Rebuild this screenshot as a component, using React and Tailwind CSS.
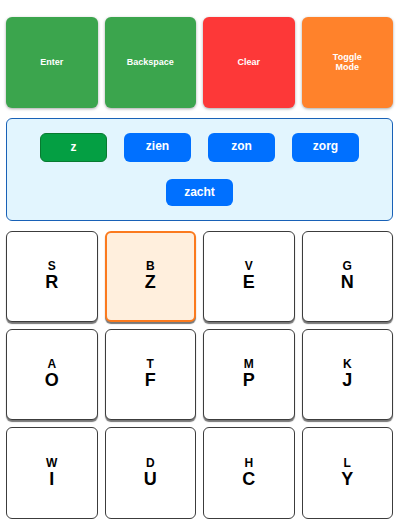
const actions = [
  { label: 'Enter', color: 'bg-[#3ba54d]' },
  { label: 'Backspace', color: 'bg-[#3ba54d]' },
  { label: 'Clear', color: 'bg-[#fd3838]' },
  { label: 'Toggle Mode', color: 'bg-[#ff822b]' },
];

const words = ['z', 'zien', 'zon', 'zorg', 'zacht'];

const keys = ['SR', 'BZ', 'VE', 'GN', 'AO', 'TF', 'MP', 'KJ', 'WI', 'DU', 'HC', 'LY'];

function ActionButton({ label, color }) {
  return (
    <button
      type="button"
      className={`flex h-[91px] items-center justify-center rounded-md px-6 pb-0.5 text-center text-[9px] leading-[10px] font-bold text-white shadow-[0_1px_3px_rgba(0,0,0,0.35)] ${color}`}
    >
      {label}
    </button>
  );
}

function WordButton({ word, active }) {
  return (
    <button
      type="button"
      className={`flex min-h-[27px] w-[67px] items-start justify-center rounded-md pt-1.5 pb-[7px] text-[12px] leading-[14px] font-bold text-white ${
        active ? 'border border-[#087a30] bg-[#049f43]' : 'bg-[#0070ff]'
      }`}
    >
      {word}
    </button>
  );
}

function LetterKey({ letters, active, last }) {
  return (
    <button
      type="button"
      className={`flex flex-col items-center justify-center rounded-md pb-0.5 font-bold text-black ${
        active ? 'border-2 border-[#fb7a1e] bg-[#ffefdd]' : 'border border-[#3c3c3c] bg-white'
      } ${last ? 'h-[92px]' : 'h-[91px] shadow-[0_2px_1px_#777777]'}`}
    >
      <span className="text-[12px] leading-[13px]">{letters[0]}</span>
      <span className="text-[18px] leading-[18px]">{letters[1]}</span>
    </button>
  );
}

export default function App() {
  return (
    <main className="flex flex-col gap-2.5 bg-white pt-[17px] pr-[13px] pb-[5px] pl-1.5 font-['Liberation_Sans',Arial,sans-serif]">
      <div className="grid grid-cols-4 gap-[7px]">
        {actions.map((action) => (
          <ActionButton key={action.label} {...action} />
        ))}
      </div>
      <section className="flex flex-wrap justify-center gap-[17px] rounded-md border border-[#1861b7] bg-[#e2f5fe] px-4 py-3.5">
        {words.map((word, i) => (
          <WordButton key={word} word={word} active={i === 0} />
        ))}
      </section>
      <div className="grid grid-cols-4 gap-[7px]">
        {keys.map((letters, i) => (
          <LetterKey key={letters} letters={letters} active={letters === 'BZ'} last={i >= 8} />
        ))}
      </div>
    </main>
  );
}
